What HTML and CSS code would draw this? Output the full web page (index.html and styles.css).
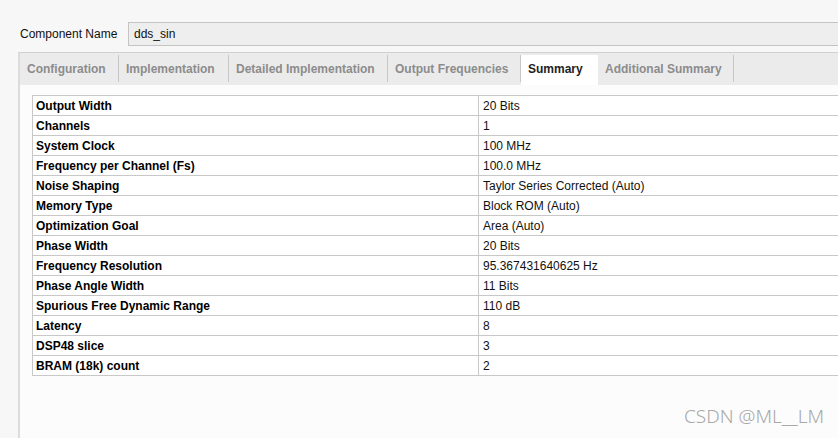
FILE: index.html
```html
<!DOCTYPE html>
<html>
<head>
<meta charset="utf-8">
<link rel="stylesheet" href="styles.css">
</head>
<body>
<div class="page">
  <div class="name-row">
    <span class="name-label">Component Name</span>
    <div class="name-input">dds_sin</div>
  </div>
  <div class="panel">
    <div class="tabs">
      <div class="tab t1">Configuration</div>
      <div class="tab t2">Implementation</div>
      <div class="tab t3">Detailed Implementation</div>
      <div class="tab t4">Output Frequencies</div>
      <div class="tab t5 active">Summary</div>
      <div class="tab t6">Additional Summary</div>
    </div>
    <div class="content">
      <table class="summary">
        <tr><th>Output Width</th><td>20 Bits</td></tr>
        <tr><th>Channels</th><td>1</td></tr>
        <tr><th>System Clock</th><td>100 MHz</td></tr>
        <tr><th>Frequency per Channel (Fs)</th><td>100.0 MHz</td></tr>
        <tr><th>Noise Shaping</th><td>Taylor Series Corrected (Auto)</td></tr>
        <tr><th>Memory Type</th><td>Block ROM (Auto)</td></tr>
        <tr><th>Optimization Goal</th><td>Area (Auto)</td></tr>
        <tr><th>Phase Width</th><td>20 Bits</td></tr>
        <tr><th>Frequency Resolution</th><td>95.367431640625 Hz</td></tr>
        <tr><th>Phase Angle Width</th><td>11 Bits</td></tr>
        <tr><th>Spurious Free Dynamic Range</th><td>110 dB</td></tr>
        <tr><th>Latency</th><td>8</td></tr>
        <tr><th>DSP48 slice</th><td>3</td></tr>
        <tr><th>BRAM (18k) count</th><td>2</td></tr>
      </table>
      <div class="watermark">CSDN @ML__LM</div>
    </div>
  </div>
</div>
</body>
</html>
```
FILE: styles.css
```css
html, body {
  margin: 0;
  padding: 0;
  background: #f7f7f7;
  font-family: "Liberation Sans", Arial, sans-serif;
  font-size: 12px;
  color: #000;
  overflow: hidden;
}
.page {
  width: 838px;
  height: 438px;
  display: flex;
  flex-direction: column;
}
.name-row {
  display: flex;
  align-items: center;
  margin-top: 21px;
  height: 26px;
  padding-left: 20px;
}
.name-label {
  width: 108px;
  font-size: 12px;
  color: #111;
}
.name-input {
  flex: 1;
  height: 24px;
  box-sizing: border-box;
  border: 1px solid #c4c4c4;
  border-right: none;
  background: #eeeeee;
  padding-left: 5px;
  line-height: 22px;
  font-size: 12px;
  color: #111;
}
.panel {
  flex: 1;
  margin-top: 5px;
  margin-left: 18px;
  border-left: 2px solid #dcdcdc;
  border-top: 1px solid #d0d0d0;
  display: flex;
  flex-direction: column;
}
.tabs {
  display: flex;
  height: 32px;
  background: #ebebeb;
  align-items: stretch;
}
.tab {
  box-sizing: border-box;
  padding-left: 7px;
  font-weight: bold;
  color: #8c8c8c;
  display: flex;
  align-items: center;
  border-right: 1px solid #c6c6c6;
  margin: 2px 0 3px 0;
  white-space: nowrap;
}
.t1 { width: 99px; }
.t2 { width: 110px; }
.t3 { width: 159px; }
.t4 { width: 133px; }
.t5 { width: 77px; }
.t6 { width: 136px; }
.tab.active {
  background: #ffffff;
  color: #222222;
  border-right: none;
  margin: 2px 0 0 0;
  padding-bottom: 3px;
}
.content {
  flex: 1;
  background: #fcfcfc;
  padding-top: 10px;
  padding-left: 12px;
  position: relative;
}
.summary {
  border-collapse: collapse;
  width: 820px;
  background: #ffffff;
}
.summary tr {
  height: 20px;
}
.summary th, .summary td {
  border: 1px solid #c8c8c8;
  padding: 0 0 0 3px;
  text-align: left;
  font-size: 12px;
  line-height: 18px;
}
.summary th {
  width: 442px;
  font-weight: bold;
  color: #000;
}
.summary td {
  color: #111;
  padding-left: 4px;
}
.watermark {
  position: absolute;
  right: 14px;
  bottom: 9px;
  font-family: "Noto Sans", "Open Sans", sans-serif;
  font-size: 19px;
  font-weight: 300;
  color: #a8a8a8;
}
```
